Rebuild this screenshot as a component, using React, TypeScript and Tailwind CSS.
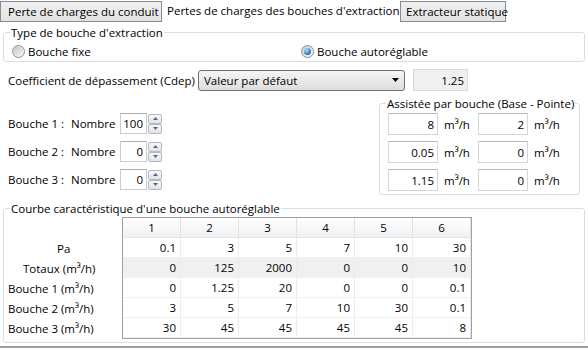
import React from 'react';

const font = "font-['Open_Sans',sans-serif]";

function Radio({ checked }: { checked?: boolean }) {
  return (
    <div className="w-[13px] h-[13px] rounded-full border border-[#8e8f8f] bg-gradient-to-br from-[#cfcfcf] to-[#fbfbfb] flex items-center justify-center shrink-0">
      {checked ? (
        <div className="w-[7px] h-[7px] rounded-full bg-[radial-gradient(circle_at_35%_30%,#b9e4ff,#3b86d0_55%,#1a4c86)]" />
      ) : (
        <div className="w-[9px] h-[9px] rounded-full bg-gradient-to-br from-[#c8c8c8] to-[#f4f4f4]" />
      )}
    </div>
  );
}

function Spinner() {
  const btn = 'h-[10px] w-[14px] border border-[#b5b8bd] rounded-[2px] bg-gradient-to-b from-[#f7f7f7] to-[#e1e3e6] flex items-center justify-center';
  return (
    <div className="flex flex-col ml-[1px]">
      <div className={btn}>
        <svg width="5" height="3" viewBox="0 0 5 3"><path d="M0 3 L2.5 0 L5 3 Z" fill="#4d6a9a" /></svg>
      </div>
      <div className={btn}>
        <svg width="5" height="3" viewBox="0 0 5 3"><path d="M0 0 L2.5 3 L5 0 Z" fill="#4d6a9a" /></svg>
      </div>
    </div>
  );
}

function Unit() {
  return <span className="w-[40px] pl-[6px]">m³/h</span>;
}

const bouches = [
  { n: 1, v: '100' },
  { n: 2, v: '0' },
  { n: 3, v: '0' },
];

const assist = [
  ['8', '2'],
  ['0.05', '0'],
  ['1.15', '0'],
];

const rows = [
  { label: 'Pa', pl: 'pl-[53px]', vals: ['0.1', '3', '5', '7', '10', '30'], gray: false },
  { label: 'Totaux (m³/h)', pl: 'pl-[19px]', vals: ['0', '125', '2000', '0', '0', '10'], gray: true },
  { label: 'Bouche 1 (m³/h)', pl: 'pl-[4px]', vals: ['0', '1.25', '20', '0', '0', '0.1'], gray: false },
  { label: 'Bouche 2 (m³/h)', pl: 'pl-[4px]', vals: ['3', '5', '7', '10', '30', '0.1'], gray: false },
  { label: 'Bouche 3 (m³/h)', pl: 'pl-[4px]', vals: ['30', '45', '45', '45', '45', '8'], gray: false },
];

export default function App() {
  return (
    <div className={`w-[588px] h-[350px] bg-white text-black text-[11.5px] leading-[15px] whitespace-nowrap overflow-hidden flex flex-col ${font}`}>
      {/* onglets */}
      <div className="h-[22px] flex items-end shrink-0">
        <div className="h-[21px] w-[162px] border border-[#898c95] bg-gradient-to-b from-[#f0f0f0] to-[#e3e3e3] flex items-center pl-[7px]">
          Perte de charges du conduit
        </div>
        <div className="h-[22px] w-[238px] flex items-center pl-[5px] pb-[2px]">
          Pertes de charges des bouches d'extraction
        </div>
        <div className="h-[21px] w-[106px] border border-[#898c95] bg-gradient-to-b from-[#f0f0f0] to-[#e3e3e3] flex items-center pl-[5px]">
          Extracteur statique
        </div>
      </div>

      {/* type de bouche */}
      <fieldset className="mx-[3px] mt-[3px] border border-[#d5dfe5] rounded-[3px] pb-[2px]">
        <legend className="ml-[6px] px-[1px]">Type de bouche d'extraction</legend>
        <div className="flex items-center h-[16px] mt-[3px] pl-[8px]">
          <div className="w-[289px] flex items-center gap-[3px]">
            <Radio />
            <span>Bouche fixe</span>
          </div>
          <div className="flex items-center gap-[3px]">
            <Radio checked />
            <span>Bouche autoréglable</span>
          </div>
        </div>
      </fieldset>

      {/* coefficient */}
      <div className="flex items-center h-[22px] mt-[7px]">
        <span className="w-[198px] pl-[8px]">Coefficient de dépassement (Cdep)</span>
        <div className="w-[207px] h-[21px] border border-[#707070] rounded-[3px] bg-gradient-to-b from-[#f5f5f5] to-[#dedede] flex items-center justify-between pl-[5px] pr-[5px]">
          <span>Valeur par défaut</span>
          <svg width="7" height="4" viewBox="0 0 7 4"><path d="M0 0 L7 0 L3.5 4 Z" fill="#000" /></svg>
        </div>
        <div className="ml-[8px] w-[55px] h-[22px] bg-[#f0f0f0] border border-[#dadada] flex items-center justify-end pr-[3px]">
          1.25
        </div>
      </div>

      {/* bouches + assistée */}
      <div className="flex mt-[5px]">
        <div className="w-[376px] pt-[17px] flex flex-col gap-[7px]">
          {bouches.map(b => (
            <div key={b.n} className="flex items-center h-[21px]">
              <div className="w-[120px] flex gap-[7px] pl-[8px]">
                <span>Bouche {b.n} :</span>
                <span>Nombre</span>
              </div>
              <div className="w-[27px] h-[21px] border border-[#c9cdd3] border-t-[#abadb3] flex items-center justify-end pr-[3px]">{b.v}</div>
              <Spinner />
            </div>
          ))}
        </div>
        <fieldset className="ml-[3px] w-[201px] border border-[#d5dfe5] rounded-[3px] pl-[8px] pb-[3px]">
          <legend className="ml-[-2px] px-[1px]">Assistée par bouche (Base - Pointe)</legend>
          <div className="flex flex-col gap-[6px] mt-[2px]">
            {assist.map((r, i) => (
              <div key={i} className="flex items-center h-[22px]">
                <div className="w-[50px] h-[22px] border border-[#d2d6dc] border-t-[#b5b8bd] flex items-center justify-end pr-[3px]">{r[0]}</div>
                <Unit />
                <div className="w-[50px] h-[22px] border border-[#d2d6dc] border-t-[#b5b8bd] flex items-center justify-end pr-[3px]">{r[1]}</div>
                <Unit />
              </div>
            ))}
          </div>
        </fieldset>
      </div>

      {/* courbe */}
      <fieldset className="mx-[3px] mt-[6px] border border-[#d5dfe5] rounded-[3px] pb-[3px]">
        <legend className="ml-[6px] px-[1px]">Courbe caractéristique d'une bouche autoréglable</legend>
        <div className="flex mt-[1px]">
          <div className="w-[118px] flex flex-col pt-[21px]">
            {rows.map(r => (
              <div key={r.label} className={`h-[20px] flex items-center ${r.pl}`}>{r.label}</div>
            ))}
          </div>
          <div className="w-[350px] border border-[#a0a0a0] flex flex-col">
            <div className="flex h-[20px] bg-gradient-to-b from-[#ffffff] to-[#f0f1f3] border-b border-[#e3e5e8]">
              {[1, 2, 3, 4, 5, 6].map(c => (
                <div key={c} className="w-[58px] border-r border-[#dfe2e6] flex items-center justify-center">{c}</div>
              ))}
            </div>
            {rows.map(r => (
              <div key={r.label} className={`flex h-[20px] border-b border-[#f0f0f0] ${r.gray ? 'bg-[#f0f0f0]' : ''}`}>
                {r.vals.map((v, i) => (
                  <div key={i} className="w-[58px] border-r border-[#ececec] flex items-center justify-end pr-[4px]">{v}</div>
                ))}
              </div>
            ))}
          </div>
        </div>
      </fieldset>

      <div className="mt-[3px] h-[2px] bg-[#a0a0a0]" />
    </div>
  );
}
